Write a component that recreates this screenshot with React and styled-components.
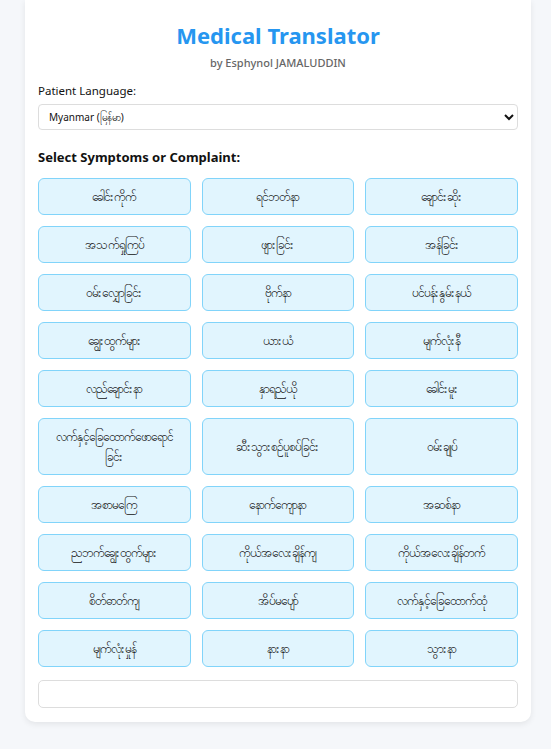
import React from "react";
import styled, { createGlobalStyle } from "styled-components";

const Global = createGlobalStyle`
  html, body { margin: 0; padding: 0; background: #f5f7fa; }
  body { font-family: "Noto Sans", "Liberation Sans", sans-serif; color: #222; }
  * { box-sizing: border-box; }
`;

const Page = styled.div`
  padding: 0 20px 26px 25px;
`;

const Card = styled.div`
  background: #fff;
  border-radius: 0 0 10px 10px;
  box-shadow: 0 2px 6px rgba(0, 0, 0, 0.08);
  padding: 19px 13px 14px;
`;

const Title = styled.h1`
  margin: 0;
  text-align: center;
  color: #2696f0;
  font-size: 22px;
  font-weight: 700;
  line-height: 32px;
`;

const Subtitle = styled.div`
  text-align: center;
  color: #666;
  font-size: 11px;
  font-weight: 500;
  margin-top: 4px;
  line-height: 16px;
`;

const Label = styled.div`
  font-size: 11.5px;
  color: #111;
  margin-top: 12px;
  line-height: 16px;
`;

const Select = styled.select`
  display: block;
  width: 100%;
  height: 26px;
  margin-top: 5px;
  font-size: 10px;
  font-family: inherit;
  padding: 0 6px;
  border: 1px solid #ddd;
  border-radius: 4px;
  background: #fff;
  color: #111;
`;

const Heading = styled.h2`
  margin: 18px 0 0;
  font-size: 13px;
  font-weight: 700;
  color: #111;
  line-height: 18px;
`;

const Grid = styled.div`
  display: grid;
  grid-template-columns: repeat(3, 1fr);
  gap: 11px;
  margin-top: 12px;
`;

const Symptom = styled.button`
  background: #e1f5fe;
  border: 1px solid #81d4fa;
  border-radius: 6px;
  padding: 7.5px 10px;
  font-size: 12px;
  line-height: 20px;
  color: #111;
  font-family: inherit;
  text-align: center;
  cursor: pointer;
`;

const Output = styled.div`
  margin-top: 13px;
  height: 28px;
  border: 1px solid #ddd;
  border-radius: 5px;
  background: #fff;
`;

const symptoms = [
  "ခေါင်းကိုက်", "ရင်ဘတ်နာ", "ချောင်းဆိုး",
  "အသက်ရှုကြပ်", "ဖျားခြင်း", "အန်ခြင်း",
  "ဝမ်းလျှောခြင်း", "ဗိုက်နာ", "ပင်ပန်းနွမ်းနယ်",
  "ချွေးထွက်များ", "ယားယံ", "မျက်လုံးနီ",
  "လည်ချောင်းနာ", "နှာရည်ယို", "ခေါင်းမူး",
  "လက်နှင့်ခြေထောက်ဖောရောင်ခြင်း", "ဆီးသွားစဉ်ပူစပ်ခြင်း", "ဝမ်းချုပ်",
  "အစာမကြေ", "နောက်ကျောနာ", "အဆစ်နာ",
  "ညဘက်ချွေးထွက်များ", "ကိုယ်အလေးချိန်ကျ", "ကိုယ်အလေးချိန်တက်",
  "စိတ်ဓာတ်ကျ", "အိပ်မပျော်", "လက်နှင့်ခြေထောက်ထုံ",
  "မျက်လုံးမှုန်", "နားနာ", "သွားနာ",
];

export default function App() {
  return (
    <Page>
      <Global />
      <Card>
        <Title>Medical Translator</Title>
        <Subtitle>by Esphynol JAMALUDDIN</Subtitle>
        <Label>Patient Language:</Label>
        <Select defaultValue="my">
          <option value="my">Myanmar (မြန်မာ)</option>
        </Select>
        <Heading>Select Symptoms or Complaint:</Heading>
        <Grid>
          {symptoms.map((s) => (
            <Symptom key={s}>{s}</Symptom>
          ))}
        </Grid>
        <Output />
      </Card>
    </Page>
  );
}
